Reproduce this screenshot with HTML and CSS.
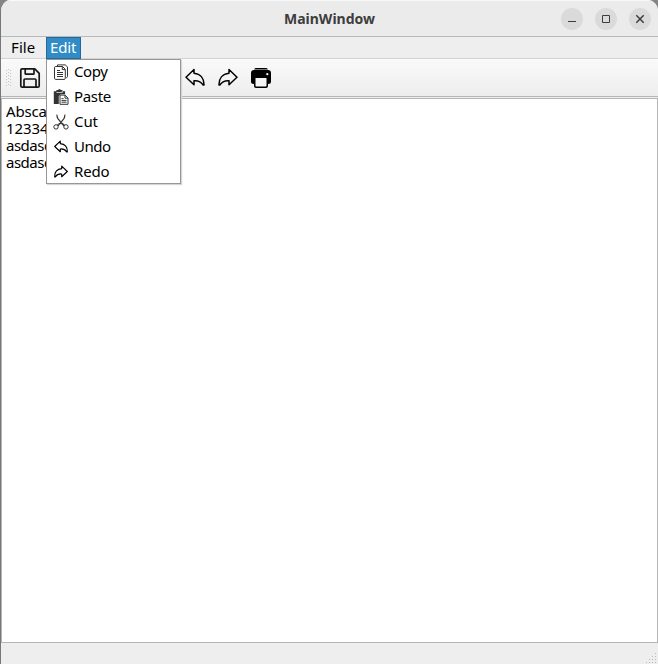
FILE: index.html
```html
<!DOCTYPE html>
<html lang="en">
<head>
<meta charset="utf-8">
<title>MainWindow</title>
<link rel="stylesheet" href="styles.css">
</head>
<body>
<svg width="0" height="0" class="defs">
  <symbol id="undo" viewBox="0 0 20 20"><path d="M9 1.5 1 9.3l8 7.5v-4c4-.3 7 .8 9.2 4.3h.8C19.2 10.6 15.6 5.8 9 5.2z" fill="none" stroke="currentColor" stroke-linejoin="round"/></symbol>
</svg>
<div class="window">
  <header class="titlebar">
    <h1 class="title">MainWindow</h1>
    <div class="controls">
      <span class="control"><svg width="22" height="22"><path d="M7 13.5h8"/></svg></span>
      <span class="control"><svg width="22" height="22"><path d="M7.5 7.5h7v7h-7z"/></svg></span>
      <span class="control"><svg width="22" height="22"><path d="m7.3 7.3 7.4 7.4m0-7.4-7.4 7.4" stroke-width="1.5"/></svg></span>
    </div>
  </header>
  <nav class="menubar">
    <span class="menu file">File</span>
    <div class="menu edit active"><span>Edit</span>
      <div class="popup">
        <div class="item"><svg class="icon" width="16" height="16" viewBox="0 0 16 16" fill="none" stroke="#333"><path d="M4.5 2V.9h7.8l2.2 2v9.6q0 1-1.2 1.3M1.5 3.8q0-1.3 1.2-1.3h6.8l2.8 2.8v8.9q0 1.2-1.2 1.2H2.7q-1.2 0-1.2-1.2z"/><path d="M9.3 2.7v2.9h2.8M4 6.5h3M4 8.5h6M4 10.5h6M4 12.5h6"/></svg><span class="copy">Copy</span></div>
        <div class="item"><svg class="icon" width="16" height="16" viewBox="0 0 16 16"><path d="M.8 2.2h2.6V1h1.8Q6.5-.8 7.8 1h1.7v1.2h2.6v3H7.5L5.8 7v8H.8z" fill="#333"/><path d="M3.5 3.5h5.8V1.8" fill="none" stroke="#fff" stroke-width=".7"/><path d="M7 6.1h5.1l2.9 3v6.2H7z" fill="#fff" stroke="#333"/><path d="M12 6v3.2h3M8.5 9.6h2M8.5 11.4h5M8.5 13.2h5" fill="none" stroke="#333"/></svg><span class="paste">Paste</span></div>
        <div class="item"><svg class="icon" width="16" height="16" viewBox="0 0 16 16" fill="none" stroke="#333"><path d="M4 .6q-.3 2 .9 4L11 12M11.8.6q.3 2-.9 4L5 12" stroke-width="1.2"/><circle cx="3" cy="12.9" r="2.2"/><circle cx="13" cy="12.9" r="2.2"/><path d="m4.2 11 2-1.4h3.5l2 1.4"/></svg><span class="cut">Cut</span></div>
        <div class="item"><svg class="icon small-arrow" width="16" height="16"><use href="#undo" x="1" y="1" width="14" height="14"/></svg><span class="undo">Undo</span></div>
        <div class="item"><svg class="icon small-arrow flip" width="16" height="16"><use href="#undo" x="1" y="1" width="14" height="14"/></svg><span class="redo">Redo</span></div>
      </div>
    </div>
  </nav>
  <div class="toolbar">
    <svg class="handle" width="6" height="18" fill="#c4c4c4"><path d="M0 1h1v1H0zm0 3h1v1H0zm0 3h1v1H0zm0 3h1v1H0zm0 3h1v1H0zm0 3h1v1H0zM4 1h1v1H4zm0 3h1v1H4zm0 3h1v1H4zm0 3h1v1H4zm0 3h1v1H4zm0 3h1v1H4zM2 0h1v1H2zm0 3h1v1H2zm0 3h1v1H2zm0 3h1v1H2zm0 3h1v1H2zm0 3h1v1H2z"/></svg>
    <svg class="save" width="22" height="22" viewBox="0 0 22 22" fill="none" stroke="#161616" stroke-width="1.7" stroke-linejoin="round"><path d="M3.2 1.8h12.6l4.4 4.5v12.4q0 1.5-1.5 1.5H3.3q-1.5 0-1.5-1.5V3.3q0-1.5 1.4-1.5z"/><path d="M6.2 2v4.4q0 .8.8.8h7.2q.8 0 .8-.8V2M5 20v-7q0-1 1-1h10q1 0 1 1v7"/></svg>
    <svg class="arrow" width="20" height="20"><use href="#undo"/></svg>
    <svg class="arrow flip" width="20" height="20"><use href="#undo"/></svg>
    <svg class="print" width="20" height="20" viewBox="0 0 20 20"><path d="M4.7 0h10.6q1.2 0 1.6 1.5H3.1Q3.5 0 4.7 0zM3 2h14q3 0 3 3v8.5q0 2.5-2.8 2.5H17v2q0 2-2 2H5q-2 0-2-2v-2h-.2Q0 16 0 13.5V5q0-3 3-3z"/><path d="M4.5 10h11v7.7q0 .8-.8.8H5.3q-.8 0-.8-.8z" fill="#f5f5f5"/><circle cx="16.3" cy="6.2" r="1.1" fill="#fff"/></svg>
  </div>
  <main class="editor"><div>Absca</div><div class="digits">12334</div><div class="letters">asdasd</div><div class="letters">asdasd</div><i class="trail"></i></main>
  <footer class="statusbar"><svg width="11" height="11" fill="#b8b8b8"><path d="M9 0h1v1H9zM6 3h1v1H6zm3 0h1v1H9zM3 6h1v1H3zm3 0h1v1H6zm3 0h1v1H9zM0 9h1v1H0zm3 0h1v1H3zm3 0h1v1H6zm3 0h1v1H9z"/></svg></footer>
</div>
</body>
</html>
```
FILE: styles.css
```css
* { box-sizing: border-box; }
body { margin: 0; background: #858585; overflow: hidden; font: 15px/17px "Noto Sans", "Open Sans", sans-serif; color: #000; }
.defs { position: absolute; }
.window { width: 658px; height: 664px; display: flex; flex-direction: column; border-left: 1px solid #777; border-radius: 11px 11px 0 0; background: #eee; overflow: hidden; }
.titlebar { height: 37px; flex: none; display: grid; grid-template-columns: 1fr auto 1fr; align-items: center; background: #ebebeb; border-top: 1px solid #f8f8f8; border-bottom: 1px solid #b9b9b9; }
.title { grid-column: 2; margin: 0; font-size: 14px; line-height: 18px; font-weight: 700; color: #3d3d3d; }
.controls { display: flex; gap: 12px; justify-self: end; padding-right: 7px; }
.control { width: 22px; height: 22px; border-radius: 50%; background: #dadada; }
.control svg { display: block; fill: none; stroke: #3d3d3d; }
.menubar { height: 22px; flex: none; display: flex; padding-left: 5px; border-bottom: 1px solid #d3d3d3; background: #eee; }
.menu { height: 22px; line-height: 21px; padding-left: 5px; }
.file { width: 40px; letter-spacing: .1px; }
.edit { width: 35px; position: relative; padding-left: 3px; border: 1px solid #236897; background: #308cc6; color: #fff; }
.edit > span { display: block; line-height: 19px; letter-spacing: -.15px; }
.popup { position: absolute; z-index: 2; left: -1px; top: 21px; width: 135px; height: 125px; border: 1px solid #979797; background: #fff; color: #000; box-shadow: 1px 1px 1px #d6d6d6; }
.item { height: 25px; display: flex; align-items: center; padding-left: 6px; position: relative; top: -1px; }
.icon { flex: none; margin-right: 5px; overflow: visible; }
.copy { letter-spacing: -.4px; }
.paste { letter-spacing: -.35px; }
.cut { letter-spacing: -.1px; }
.undo { letter-spacing: -.5px; }
.redo { letter-spacing: -.2px; }
.small-arrow, .arrow { color: #000; }
.small-arrow { stroke-width: 1.6; }
.flip { transform: scaleX(-1); }
.toolbar { height: 38px; flex: none; display: flex; align-items: center; padding-left: 5px; background: linear-gradient(#fafafa, #ededed); border-bottom: 1px solid #b5b5b5; }
.toolbar svg { flex: none; }
.save { margin-left: 7px; margin-right: 144px; }
.arrow { margin-right: 13px; stroke-width: 1.5; }
.editor { position: relative; height: 545px; flex: none; margin-top: 1px; padding: 4px 4px; background: #fff; border: 1px solid #b5b5b5; letter-spacing: -.2px; }
.editor div { width: 41px; overflow: hidden; white-space: nowrap; }
.digits { letter-spacing: -.1px; }
.letters { letter-spacing: -.5px; }
.trail { position: absolute; left: 179px; top: 10px; width: 1px; height: 2px; background: #5b9cc4; }
.statusbar { flex: 1; display: flex; align-items: flex-end; justify-content: flex-end; padding-right: 1px; background: #eee; }
```
